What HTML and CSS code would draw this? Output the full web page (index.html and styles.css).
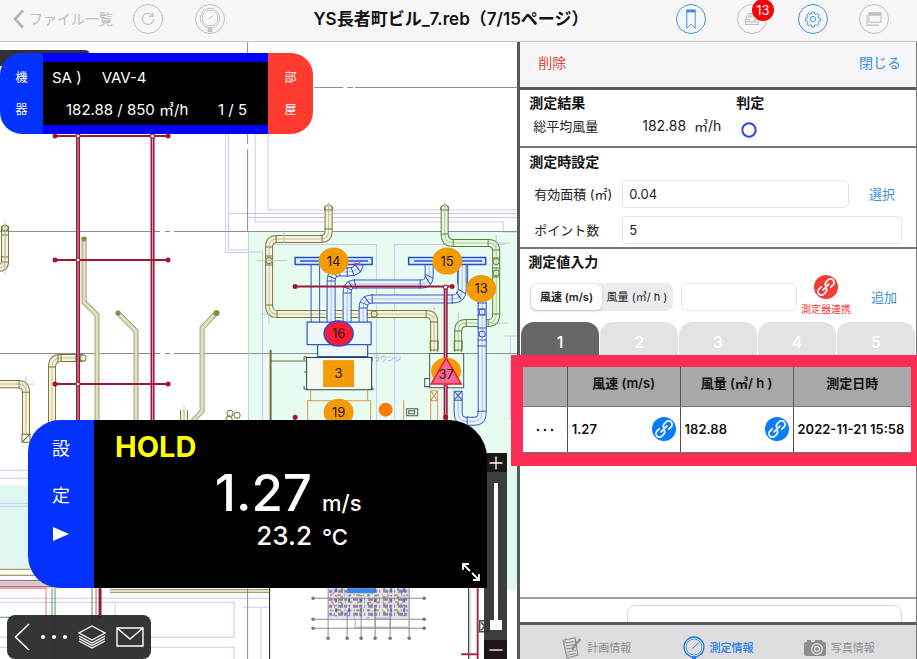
FILE: index.html
```html
<!DOCTYPE html>
<html lang="ja">
<head>
<meta charset="utf-8">
<title>YS長者町ビル_7.reb</title>
<link rel="stylesheet" href="styles.css">
</head>
<body>
<svg class="sprite" aria-hidden="true">
  <symbol id="link" viewBox="0 0 24 24">
    <circle cx="12" cy="12" r="12" fill="currentColor"/>
    <g fill="none" stroke="#fff" stroke-width="1.7" transform="rotate(-45 12 12)">
      <path d="M9.500 8.500H5.500a3.500 3.500 0 0 0 0 7H8a3.500 3.500 0 0 0 3.300-2.500"/>
      <path d="M14.500 15.500h4a3.500 3.500 0 0 0 0-7H16a3.500 3.500 0 0 0-3.300 2.500"/>
      <path d="M8 12h8" stroke-linecap="round"/>
    </g>
  </symbol>
</svg>

<header class="topbar">
  <div class="topbar-left">
    <button class="back" type="button">
      <svg width="12" height="20" viewBox="0 0 12 20"><path d="M10 1.500L2 10l8 8.500" fill="none" stroke="#b4b4b6" stroke-width="2.600"/></svg>
      <span>ファイル一覧</span>
    </button>
    <button class="round muted" type="button" aria-label="更新">
      <svg viewBox="0 0 30 30"><path d="M20 11.500A6 6 0 1 0 21 15M20.500 8v4.200h-4.200" fill="none" stroke="currentColor" stroke-width="1.200"/></svg>
    </button>
    <button class="round muted" type="button" aria-label="測定器">
      <svg viewBox="0 0 30 30"><g fill="none" stroke="currentColor"><circle cx="15" cy="14" r="10.500"/><circle cx="15" cy="14" r="8.500"/><path d="M14 15l4-4"/></g><path d="M12.500 25h5v4h-5z" fill="currentColor"/></svg>
    </button>
  </div>
  <h1>YS長者町ビル_7.reb（7/15ページ）</h1>
  <div class="topbar-right">
    <button class="round active" type="button" aria-label="しおり">
      <svg viewBox="0 0 30 30"><path d="M10.500 5.500h9v19.500L15 20.500 10.500 25z" fill="none" stroke="currentColor"/><path d="M10 5h10v3H10z" fill="currentColor"/></svg>
    </button>
    <button class="round muted" type="button" aria-label="受信箱">
      <svg viewBox="0 0 30 30"><g fill="none" stroke="currentColor" stroke-width="1.100"><path d="M8 21v-6l3-6h8l3 6v6zM8 15.500h4a3 3 0 0 0 6 0h4M11 12.500h8M8 18h14"/><path d="M12 13a3 2.500 0 0 1 6 0"/></g></svg>
      <span class="badge">13</span>
    </button>
    <button class="round active" type="button" aria-label="設定">
      <svg viewBox="0 0 30 30"><g fill="none" stroke="currentColor"><circle cx="15" cy="15" r="2.800"/><path d="M13.700 7.500h2.600l.4 2 1.500.6 1.700-1.200 1.800 1.800-1.200 1.700.6 1.500 2 .4v2.600l-2 .4-.6 1.500 1.200 1.700-1.800 1.800-1.700-1.200-1.500.6-.4 2h-2.600l-.4-2-1.500-.6-1.700 1.200-1.800-1.800 1.200-1.700-.6-1.500-2-.4v-2.600l2-.4.6-1.500-1.200-1.700 1.800-1.800 1.700 1.200 1.500-.6z"/></g></svg>
    </button>
    <button class="round muted" type="button" aria-label="ウィンドウ">
      <svg viewBox="0 0 30 30"><g fill="none" stroke="currentColor" stroke-width="1.200"><path d="M9.500 8.500h13v10h-13zM7.500 11v10.500h13"/></g><path d="M9.500 8.500h13v3h-13z" fill="currentColor"/></svg>
    </button>
  </div>
</header>

<main class="workspace">
  <section class="map" aria-label="図面">
    <svg class="drawing" viewBox="0 42 517 617" preserveAspectRatio="xMinYMin slice">
      <defs>
        <g id="brown"><path d="M328.500 206V231q0 8-8 8H277q-8 0-8 8V305q0 9 8 9H426q8 0 8 8V352"/><path d="M5 226V262q0 6-8 6"/><path d="M0 384H18q8 0 8 8V434M83 358H61q-9 0-9 9V424"/><path d="M184 410v14"/></g>
        <g id="pale"><path d="M84 237V302L97 315V424M117 312L136 331V424M217 312L202 328V411L190 424"/></g>
        <g id="green"><path d="M444.500 206V234q0 9 9 9H488q8 0 8 8V314q0 9-8 9H466q-8 0-8 8V352"/></g>
        <g id="blue"><path d="M331 322V281q0-9 8-9h8q12 0 12-9M347 322V293q0-9 8-9H421q8 0 8-8V264M363 322V308q0-9 9-9H452q10 0 10-10V264"/><path d="M458 391V412q0 9 8 9h8q8 0 8-9V302"/></g>
        <g id="main"><path d="M78 134V424M152.500 134V424M445.500 287V424"/></g>
      </defs>
      <path fill="#fff" d="M0 42h517v617H0z"/>
      <path fill="#e7fbf1" d="M248 231h269v240H248z"/>
      <path fill="#dff6f3" d="M0 485h40v83H0zM480 470h37v120h-37z"/>
      <path fill="#323234" d="M0 50H85q5 0 5 6v10H0z"/>
      <g fill="none" stroke="#cbc9f0">
        <path d="M225.500 134v118.500H247M228.500 134v116H248M231 213.500h286M248 217.500h269M255 134v88h248v10h14M268 134v76h249M262.500 250V420M376.500 420V244.500H272M394.500 420V244.500H505M510 336v84M248 252h14M503 336h14M228.500 213.500H260"/>
        <path d="M0 470h28M0 478h28M0 503h28M0 506h28M0 598h270M0 602h234M0 637h234M115 602h119v35H115zM243 607h27v52M261 607v52M0 647h234v12M470 590v69M500 475v120"/>
      </g>
      <g fill="none" stroke="#8c8f8f">
        <path d="M314 87.500h29M347 87.500h6M355 87.500h162M0 231.500h160M165 231.500h5M174 231.500h343M0 353.500h160M165 353.500h5M174 353.500h343M247.500 42v16M247.500 134v10M247.500 149v83M247.500 588v71"/>
      </g>
      <path stroke="#b7d9cf" d="M248.500 232V424"/>

      <use href="#pale" class="pipe w5" stroke="#a3a36a"/><use href="#pale" class="pipe w3" stroke="#dfe0c6"/>
      <g fill="#8a8a45"><circle cx="84" cy="239" r="2.500"/><circle cx="118" cy="313" r="2.500"/><circle cx="216.500" cy="313" r="3"/></g>
      <use href="#brown" class="pipe w8" stroke="#86752f"/><use href="#brown" class="pipe w6" stroke="#f3f4e2"/><use href="#brown" class="pipe w1" stroke="#c5bf95"/>
      <use href="#green" class="pipe w8" stroke="#4b8a35"/><use href="#green" class="pipe w6" stroke="#e9f7e3"/><use href="#green" class="pipe w1" stroke="#a9cf9c"/>
      <g fill="none" stroke="#6d7a3a">
        <path d="M324.500 210h8M324 229h9M322 235v8M276 235v8M265 247h8M265 256h8M265 265h8M265 305h8M277 310v8M426 310v8M430 322h8M2 231h7M2 235h7M2 257h7M2 262h7M19 380v8M58 354v8M61 354v8M48 367h8M76 354v8M23 392h7M430 341h8v9h-8zM454 341h8v9h-8zM440.500 210h8M441 234h7M453 239v8M488 239v8M492 250h8M492 258h8M492 268h8M492 277h8M492 314h8M466 319v8M454 331h8M488 319v8M324.500 210v-1a4 4 0 0 1 8 0v1M440.500 210v-1a4 4 0 0 1 8 0v1"/>
        <circle cx="269" cy="260.500" r="3"/><circle cx="496" cy="261.500" r="3"/><circle cx="496" cy="273" r="3"/><circle cx="364" cy="314" r="3"/><circle cx="374" cy="314" r="3"/><circle cx="5" cy="228" r="3"/><circle cx="83" cy="358" r="3"/><circle cx="230" cy="413" r="3"/><circle cx="237" cy="415" r="3"/><circle cx="229" cy="419" r="3"/>
        <path d="M22 434h8v8h-8zM22 442l8-8M271 350V424M271 361h35M270 350v74" stroke="#7c6a2c"/>
      </g>
      <g fill="none" stroke="#b9c3b4" stroke-width=".8"><path d="M257 260.500h30M284 243v-13M328.500 202v14M444.500 202v14M496 235v20M488 243h22M488 323h20M269 306v18M261 314h16M434 306v12M458 312v16M5 220v55M26 376v20M16 384h18M184 405v10"/></g>

      <use href="#blue" class="pipe w9" stroke="#3057c9"/><use href="#blue" class="pipe w7" stroke="#eaf5fb"/><use href="#blue" class="pipe w1" stroke="#a9bdec"/>
      <g fill="none" stroke="#3057c9">
        <path d="M311 264V322M319.500 264V322M457.500 264v20M467.500 264v20M327 281h8M328 276l8 3M332 270l5 7M338 267l2 9M347 267v10M351 267l3 9M355 265l6 7M358 262l6 3M343 293h8M344 287l8 3M348 281l5 7M354 279l2 10M420 279v10M425 276l5 8M425 274l8 4M359 308h8M360 302l8 3M364 296l5 7M372 294v10M452 294v10M456 292l5 7M458 289l8 5M477 303h9M477 309h9M477 315h9M477 328h9M477 340h9M477 346h9M454 391h8M454 400h8M467 416v9M477 411h9"/>
        <circle cx="482" cy="312" r="3"/><circle cx="482" cy="334" r="3"/>
        <path d="M307 322h64v22.500h-64zM317.500 345v11.500h50V345" fill="#edf8fb" stroke-width="1.200"/>
      </g>
      <g fill="#dcebfa" stroke="#2452c4" stroke-width="1.500"><path d="M295 257.500h77v7h-77zM408.500 257.500h77v7h-77z"/><path d="M300 261h68M414 261h68"/></g>
      <path d="M354 263l8 2M355 266l5-4" stroke="#c33a86"/>
      <path d="M306.500 357.500h65v32h-65z" fill="#f3faf0" stroke="#2d3e4d"/>
      <path d="M304 360v-3h3M304 372h3M304 386v3M372 357v4M372 386v3M304 389h4M370 389h4M429.500 353.500h34v34h-34zM424.500 378.500h5v8h-5zM406.500 408.500h11v7h-11zM408.500 410.500h6v3h-6z" fill="none" stroke="#4a5751"/>
      <path d="M310.500 390v10.500h57V390M307.500 424v-23.500h63V424M430.500 424V390.500h7V424M430.500 390.500l7 10M437.500 390.500l-7 10M430.500 400.500h7M403.500 400V420" fill="none" stroke="#d89a4c"/>
      <path d="M454 391l8 9M462 391l-8 9" stroke="#3057c9"/>

      <use href="#main" class="pipe w4" stroke="#96183a"/><use href="#main" class="pipe w1" stroke="#e3a9b8"/>
      <g stroke="#9c1838" stroke-width="2"><path d="M55 136h113M55 260h113M55 384h113M295 286.500h157M295 417v7"/></g>
      <g fill="#9c1838"><circle cx="55" cy="136" r="2.500"/><circle cx="168" cy="136" r="2.500"/><circle cx="55" cy="260" r="2.500"/><circle cx="168" cy="260" r="2.500"/><circle cx="55" cy="384" r="2.500"/><circle cx="168" cy="384" r="2.500"/><circle cx="295" cy="286.500" r="2.500"/><circle cx="452" cy="286.500" r="2.500"/><circle cx="295" cy="417" r="2.500"/><circle cx="445.500" cy="417" r="2.500"/></g>
      <g fill="#fff" stroke="#9c1838"><circle cx="78" cy="136" r="2"/><circle cx="152.500" cy="136" r="2"/><circle cx="78" cy="260" r="2"/><circle cx="78" cy="384" r="2"/><circle cx="445.500" cy="287" r="2"/></g>

      <g fill="none">
        <path d="M0 569h30M0 575h40M110 589.500h160M110 592h160" stroke="#8f7a35"/>
        <path d="M0 580.500h45M0 586.500h60" stroke="#8f3550"/><path d="M0 583.500h48" stroke="#d8c5cc" stroke-width="4"/>
        <path d="M0 588h46v28" stroke="#ee7777"/>
        <path d="M52 588v71M55 588v71M0 617h30" stroke="#4d9a55"/>
        <path d="M92 588v40M96 588v40" stroke="#8a7a4c"/><path d="M100 588v30" stroke="#96183a" stroke-width="3"/>
      </g>

      <path d="M269.500 586h199v80h-199z" fill="#fff" stroke="#222"/>
      <path d="M328 588h82v30h-82z" fill="#e4e2ec"/>
      <g fill="none">
        <path d="M329 591h80M329 599h80M329 606h80M329 614h80" stroke="#8d84a8" stroke-width="3" stroke-dasharray="3 2 1 3 5 1"/>
        <path d="M330 595h78M331 602h76M330 610h78" stroke="#c59a55" stroke-width="2" stroke-dasharray="2 5 4 3 1 4"/>
        <path d="M336 588v30M349 588v30M361 588v30M375 588v30M391 588v30M404 588v30" stroke="#526bb9" stroke-width="2" stroke-dasharray="4 3 1 2"/>
        <path d="M342 588v30M368 594v24M384 588v30M398 588v30" stroke="#5b9a70" stroke-width="2" stroke-dasharray="2 6 3 4"/>
        <path d="M333 588v30M354 594v24M372 588v30M387 592v26M401 588v30" stroke="#b06a8c" stroke-dasharray="1 3 2 5"/>
        <path d="M347 588h28v5h-28z" fill="#3b86e8"/>
        <path d="M355 618v9h54M375 618h15v9h-15z" stroke="#aaa3c8"/>
        <path d="M313 598h111M313 619h111M313 628h111M328 588v49M347 610v27M361 610v27M375 610v27M390 610v27M409 588v49" stroke="#8b8b92"/>
      </g>
      <g fill="#77777d"><circle cx="313" cy="598" r="1.800"/><circle cx="424" cy="598" r="1.800"/><circle cx="313" cy="619" r="1.800"/><circle cx="424" cy="619" r="1.800"/><circle cx="313" cy="628" r="1.800"/><circle cx="424" cy="628" r="1.800"/><circle cx="328" cy="638" r="1.800"/><circle cx="347" cy="638" r="1.800"/><circle cx="361" cy="638" r="1.800"/><circle cx="375" cy="638" r="1.800"/><circle cx="390" cy="638" r="1.800"/><circle cx="409" cy="638" r="1.800"/></g>
      <path d="M477.500 588v71M461 654h16" stroke="#a82a48" stroke-width="2"/>
      <path d="M479.500 620.500h10v11h-10zM481 622l7 8M488 622l-7 8" fill="none" stroke="#3b5a38" stroke-width="1.500"/>

      <text x="373" y="361" class="room">ラウンジ</text>
      <g class="pins">
        <g fill="#f29a08"><ellipse cx="333.500" cy="261" rx="15" ry="13.500"/><ellipse cx="447" cy="261" rx="15" ry="13.500"/><ellipse cx="481" cy="288.500" rx="15" ry="13.500"/><ellipse cx="338.500" cy="412" rx="15" ry="13.500"/><ellipse cx="446" cy="371" rx="15" ry="13.500"/><path d="M323 360h31v27h-31z"/></g>
        <circle cx="385.500" cy="409.500" r="7" fill="#ff7b00"/>
        <ellipse cx="338.500" cy="333.500" rx="14.500" ry="12.500" fill="#fb1c34" stroke="#2a48d8" stroke-width="1.500"/>
        <path d="M446 358l15 26h-30z" fill="#fb6390" stroke="#e8202e" stroke-width="1.500"/>
        <text x="333.500" y="266">14</text><text x="447" y="266">15</text><text x="481" y="293">13</text><text x="338.500" y="338">16</text><text x="338.500" y="378">3</text><text x="338.500" y="417">19</text><text x="446" y="379">37</text>
      </g>
    </svg>

    <div class="device">
      <button class="device-side" type="button"><span>機</span><span>器</span></button>
      <div class="device-info">
        <p><span>SA )</span><span>VAV-4</span></p>
        <p class="flow"><span>182.88 / 850 ㎥/h</span><span>1 / 5</span></p>
      </div>
      <button class="device-side room-side" type="button"><span>部</span><span>屋</span></button>
    </div>

    <div class="zoombar">
      <button type="button" aria-label="拡大"><svg width="14" height="14" viewBox="0 0 14 14"><path d="M7 .5v13M.5 7h13" stroke="#fff" stroke-width="1.300"/></svg></button>
      <input type="range" min="0" max="100" value="0" aria-label="ズーム">
      <button type="button" aria-label="縮小"><svg width="14" height="14" viewBox="0 0 14 14"><path d="M.5 7h13" stroke="#fff" stroke-width="1.300"/></svg></button>
    </div>

    <div class="meter">
      <button class="meter-side" type="button"><span>設</span><span>定</span>
        <svg width="16" height="14" viewBox="0 0 16 14"><path d="M0 0l16 7-16 7z" fill="#fff"/></svg></button>
      <div class="meter-body">
        <strong>HOLD</strong>
        <div class="reading">
          <span class="speed">1.27</span><span class="unit">m/s</span>
          <span class="temp">23.2</span><span class="unit">°C</span>
        </div>
        <button class="resize" type="button" aria-label="サイズ変更"><svg width="18" height="18" viewBox="0 0 18 18"><path d="M7 1H1v6M1 1l7 7M17 11v6h-6M17 17l-7-7" fill="none" stroke="#fff" stroke-width="1.800"/></svg></button>
      </div>
    </div>

    <div class="tools">
      <button type="button" aria-label="戻る"><svg width="16" height="28" viewBox="0 0 16 28"><path d="M15 1L1.500 14 15 27" fill="none" stroke="#fff" stroke-width="1.600"/></svg></button>
      <button type="button" aria-label="その他"><svg width="28" height="6" viewBox="0 0 28 6"><g fill="#fff"><circle cx="3" cy="3" r="2.100"/><circle cx="14" cy="3" r="2.100"/><circle cx="25" cy="3" r="2.100"/></g></svg></button>
      <button type="button" aria-label="レイヤー"><svg width="28" height="24" viewBox="0 0 28 24"><g fill="none" stroke="#fff" stroke-width="1.400"><path d="M14 1l13 7-13 7L1 8zM1 11l13 7 13-7M1 13.500l13 7 13-7M1 16l13 7 13-7"/></g></svg></button>
      <button type="button" aria-label="メール"><svg width="28" height="20" viewBox="0 0 28 20"><path d="M1 1h26v18H1zM1 1l13 11L27 1" fill="none" stroke="#fff" stroke-width="1.400"/></svg></button>
    </div>
  </section>

  <aside class="panel">
    <div class="panel-head">
      <button class="danger" type="button">削除</button>
      <button class="text-link" type="button">閉じる</button>
    </div>

    <section class="block result">
      <div class="result-flow">
        <h2>測定結果</h2>
        <p><span>総平均風量</span><span class="result-value">182.88&nbsp; ㎥/h</span></p>
      </div>
      <div>
        <h2>判定</h2>
        <svg class="judge" width="16" height="16" viewBox="0 0 16 16" role="img" aria-label="良"><circle cx="8" cy="8" r="6.700" fill="none" stroke="#2f45e0" stroke-width="2"/></svg>
      </div>
    </section>

    <section class="block settings">
      <h2>測定時設定</h2>
      <div class="field">
        <label for="area">有効面積 (㎡)</label>
        <input id="area" type="text" value="0.04">
        <button class="text-link" type="button">選択</button>
      </div>
      <div class="field">
        <label for="points">ポイント数</label>
        <input id="points" type="text" value="5">
      </div>
    </section>

    <section class="entry">
      <h2>測定値入力</h2>
      <div class="entry-row">
        <div class="segment">
          <button class="on" type="button">風速 (m/s)</button>
          <button type="button">風量 (㎥/ h )</button>
        </div>
        <input type="text" aria-label="測定値">
        <button class="pair" type="button"><svg width="24" height="24"><use href="#link"/></svg><span>測定器連携</span></button>
        <button class="text-link" type="button">追加</button>
      </div>
      <nav class="points">
        <button class="on" type="button">1</button><button type="button">2</button><button type="button">3</button><button type="button">4</button><button type="button">5</button>
      </nav>
      <div class="records">
        <table>
          <thead><tr><th class="menu-col"></th><th>風速 (m/s)</th><th>風量 (㎥/ h )</th><th class="date-col">測定日時</th></tr></thead>
          <tbody><tr>
            <td class="menu-col"><button type="button" aria-label="行メニュー"><svg width="18" height="4" viewBox="0 0 18 4"><g fill="#222"><circle cx="2" cy="2" r="1.300"/><circle cx="9" cy="2" r="1.300"/><circle cx="16" cy="2" r="1.300"/></g></svg></button></td>
            <td><div class="cell"><span>1.27</span><svg width="24" height="24"><use href="#link"/></svg></div></td>
            <td><div class="cell"><span>182.88</span><svg width="24" height="24"><use href="#link"/></svg></div></td>
            <td class="date-col">2022-11-21 15:58</td>
          </tr></tbody>
        </table>
      </div>
    </section>

    <div class="memo"><textarea aria-label="備考"></textarea></div>

    <nav class="tabs">
      <a href="#plan"><svg width="20" height="22" viewBox="0 0 20 22"><g fill="none" stroke="currentColor" stroke-width="1.200"><path d="M1 3l12-2 3 17-11 3zM4 1.500l-1.500 4M3.500 6l9-1.500M4 9l9-1.500M4.500 12l9-1.500M5 15l9-1.500M5.500 18l9-1.500"/><path d="M18.500 2l-7 8-1 3" stroke-width="2.200"/></g></svg>計画情報</a>
      <a class="on" href="#measure"><svg width="22" height="24" viewBox="0 0 22 24"><g fill="none" stroke="currentColor"><circle cx="11" cy="11" r="10" stroke-width="1.300"/><circle cx="11" cy="11" r="8" stroke-width=".7"/><path d="M9.500 12.500l6-5.500"/></g><path d="M9 20.500h4V24H9z" fill="currentColor"/></svg>測定情報</a>
      <a href="#photo"><svg width="22" height="18" viewBox="0 0 22 18"><path d="M2 3h1V1h4v2h3l1-2h7l1 2h1q2 0 2 2v10q0 2-2 2H2q-2 0-2-2V5q0-2 2-2z" fill="currentColor"/><circle cx="13" cy="10" r="5.300" fill="none" stroke="#dedcde" stroke-width="1.300"/><circle cx="13" cy="10" r="2.500" fill="none" stroke="#dedcde" stroke-width="1.300"/></svg>写真情報</a>
    </nav>
  </aside>
</main>
</body>
</html>
```
FILE: styles.css
```css
* { box-sizing: border-box; }

body {
  margin: 0;
  height: 100vh;
  display: flex;
  flex-direction: column;
  overflow: hidden;
  font-family: Inter, "Noto Sans CJK JP", sans-serif;
  font-size: 13px;
  line-height: 20px;
  color: #222;
  background: #fff;
}

h1, h2, p { margin: 0; }
button { padding: 0; border: 0; background: none; font: inherit; color: inherit; }
svg { display: block; flex: none; }
.sprite { position: absolute; width: 0; height: 0; }

/* top bar */
.topbar {
  display: grid;
  grid-template-columns: 1fr auto 1fr;
  align-items: center;
  flex: none;
  height: 42px;
  padding: 0 28px 4px 13px;
  background: #f7f7f8;
  border-bottom: 1px solid #c4c4c6;
}
.topbar h1 { font-size: 17px; font-weight: 600; color: #111; white-space: nowrap; }
.topbar-left, .topbar-right { display: flex; align-items: center; }
.topbar-left { gap: 32px; }
.topbar-right { gap: 31px; justify-content: flex-end; }
.back { display: flex; align-items: center; gap: 4px; margin-right: -12px; font-size: 14px; color: #bcbcbe; white-space: nowrap; }
.round { position: relative; flex: none; width: 30px; height: 30px; border: 1px solid currentColor; border-radius: 50%; }
.round > svg { width: 28px; height: 28px; }
.muted { color: #c0c0c2; }
.active { color: #3d8fe0; }
.badge {
  position: absolute;
  top: -6px;
  right: -8px;
  width: 22px;
  height: 22px;
  border-radius: 50%;
  background: #fb0007;
  color: #fff;
  font-size: 13px;
  line-height: 22px;
}

.workspace { display: flex; flex: 1; min-height: 0; }

/* drawing */
.map { position: relative; flex: none; width: 56.4%; overflow: hidden; }
.drawing { width: 100%; height: 100%; }
.pipe { fill: none; }
.w1 { stroke-width: 1px; }
.w3 { stroke-width: 3px; }
.w4 { stroke-width: 4px; }
.w5 { stroke-width: 5px; }
.w6 { stroke-width: 6px; }
.w7 { stroke-width: 7px; }
.w8 { stroke-width: 8px; }
.w9 { stroke-width: 9px; }
.room { font-size: 7px; fill: #8c9be0; }
.pins text { font-size: 13px; text-anchor: middle; fill: #2b1a08; }

/* selected device */
.device {
  position: absolute;
  top: 11px;
  left: 0;
  display: flex;
  width: 313px;
  height: 81px;
  border-radius: 22px;
  overflow: hidden;
  color: #fff;
}
.device-side {
  display: flex;
  flex-direction: column;
  justify-content: center;
  align-items: center;
  gap: 12px;
  width: 43px;
  background: #0332ff;
  font-size: 12px;
}
.room-side { width: 45px; background: #ff3b30; }
.device-info {
  flex: 1;
  padding: 6px 9px;
  background: #000;
  border: solid #0000fe;
  border-width: 9px 0;
  font-size: 15px;
}
.device-info p { display: flex; gap: 20px; white-space: nowrap; }
.device-info .flow { justify-content: space-between; margin-top: 12px; padding: 0 12px 0 14px; }

/* zoom */
.zoombar {
  position: absolute;
  right: 10px;
  bottom: 0;
  display: flex;
  flex-direction: column;
  width: 23px;
  height: 206px;
  background: #333333f2;
}
.zoombar button { display: flex; align-items: center; justify-content: center; height: 19px; background: #1c1618; }
.zoombar input {
  flex: 1;
  width: 23px;
  min-height: 0;
  margin: 11px 0 10px;
  appearance: none;
  writing-mode: vertical-lr;
  direction: rtl;
  background: linear-gradient(#fff, #fff) center / 4px 100% no-repeat;
}
.zoombar input::-webkit-slider-thumb { appearance: none; width: 12px; height: 10px; background: #fff; }

/* anemometer */
.meter {
  position: absolute;
  top: 378px;
  left: 28px;
  display: flex;
  width: 459px;
  height: 168px;
  border-radius: 32px 38px 0 32px;
  overflow: hidden;
  color: #fff;
}
.meter-side {
  display: flex;
  flex-direction: column;
  align-items: center;
  gap: 27px;
  width: 66px;
  padding-top: 19px;
  background: #0332ff;
  font-size: 18px;
}
.meter-side svg { margin-top: -6px; }
.meter-body { position: relative; flex: 1; padding: 7px 0 0 21px; background: #000; }
.meter-body strong { display: block; font-size: 29px; line-height: 40px; color: #ff0; }
.reading {
  display: grid;
  grid-template-columns: 197px 1fr;
  column-gap: 10px;
  align-items: baseline;
  font-weight: 500;
}
.speed { font-size: 51px; line-height: 52px; text-align: right; }
.temp { font-size: 26px; line-height: 34px; text-align: right; }
.unit { font-size: 22px; }
.resize { position: absolute; right: 7px; bottom: 7px; }

.tools {
  position: absolute;
  left: 7px;
  bottom: 0;
  display: flex;
  align-items: center;
  justify-content: space-between;
  width: 144px;
  height: 44px;
  padding: 0 7px;
  border-radius: 8px;
  background: #2a2a2cf2;
}

/* measurement panel */
.panel {
  flex: 1;
  display: flex;
  flex-direction: column;
  min-width: 0;
  border-left: 3px solid #59585a;
  border-right: 1px solid #77767a;
  background: #fff;
}
.panel-head {
  display: flex;
  justify-content: space-between;
  align-items: center;
  height: 48px;
  padding: 0 15px 3px 18px;
  border-bottom: 3px solid #59585a;
  background: #f6f6f8;
  font-size: 14px;
}
.danger { color: #e8493f; }
.text-link { color: #3d8fe0; white-space: nowrap; }
.block { border-bottom: 2px solid #777; }
.panel h2 { font-size: 14px; line-height: 20px; font-weight: 700; color: #111; }
.result { display: grid; grid-template-columns: 207px 1fr; height: 58px; padding: 3px 9px; }
.result p { display: flex; margin-top: 3px; padding-left: 4px; }
.result-value { margin-left: 44px; font-size: 14px; }
.judge { margin: 9px 0 0 5px; }
.settings { height: 101px; padding: 4px 14px 4px 9px; }
.field { display: grid; grid-template-columns: 88px 1fr auto; align-items: center; margin: 8px 0 0 5px; }
.field input, .entry-row input {
  width: 100%;
  min-width: 0;
  height: 28px;
  padding: 0 6px;
  border: 1px solid #e4e4e6;
  border-radius: 5px;
  background: #fff;
  font: inherit;
  color: #222;
}
.field .text-link { padding: 0 7px 0 20px; }
.field input:last-child { grid-column: 2 / 4; }
.field label { white-space: nowrap; }

.entry { flex: 1; padding-top: 3px; }
.entry h2 { padding-left: 8px; }
.entry-row { display: flex; align-items: center; height: 50px; padding: 0 19px 0 10px; }
.segment { display: flex; flex: none; width: 143px; height: 28px; padding: 1px; border-radius: 7px; background: #ececee; font-size: 11px; }
.segment button { flex: 1; border-radius: 6px; white-space: nowrap; }
.segment .on { background: #fff; box-shadow: 0 1px 3px #0003; font-weight: 600; }
.entry-row input { flex: 1; margin-left: 8px; }
.pair { display: flex; flex-direction: column; align-items: center; margin: 0 20px 0 4px; color: #f33b38; font-size: 10px; line-height: 20px; white-space: nowrap; }
.points { display: flex; gap: 1px; padding: 0 1px; }
.points button { flex: 1; height: 33px; padding-top: 6px; border-radius: 13px 13px 0 0; background: #e3e3e4; color: #fff; font-size: 16px; font-weight: 500; }
.points .on { background: #666; }

.records {
  position: relative;
  z-index: 1;
  margin: 0 -1px 0 -9px;
  border: solid #fb2d55;
  border-width: 12px 6px 13px 12px;
}
table { width: 100%; border-collapse: collapse; table-layout: fixed; background: #fff; }
th, td { padding: 0 4px; border-left: 1px solid #555; border-bottom: 1px solid #777; color: #111; white-space: nowrap; }
th { height: 39px; padding-bottom: 6px; background: #a8a8a8; font-size: 13px; font-weight: 600; }
td { height: 46px; font-weight: 600; }
.menu-col { width: 44px; border-left: 0; text-align: center; }
.menu-col button { display: inline-block; vertical-align: middle; }
.date-col { width: 118px; }
.cell { display: flex; align-items: center; justify-content: space-between; color: #0a7cff; }
.cell span { color: #111; }

.memo { height: 25px; padding: 6px 14px 0 107px; border-top: 2px solid #a0a0a2; overflow: hidden; }
.memo textarea { display: block; width: 100%; height: 40px; border: 1px solid #dcdcde; border-radius: 8px; resize: none; }
.tabs { display: flex; height: 37px; padding: 11px 16px 0; border-top: 3px solid #59585a; background: #dedcde; }
.tabs a { flex: 1; display: flex; align-items: center; justify-content: center; gap: 5px; height: 24px; color: #8e8e92; font-size: 11px; text-decoration: none; white-space: nowrap; }
.tabs .on { color: #217fe8; font-weight: 500; }
```
